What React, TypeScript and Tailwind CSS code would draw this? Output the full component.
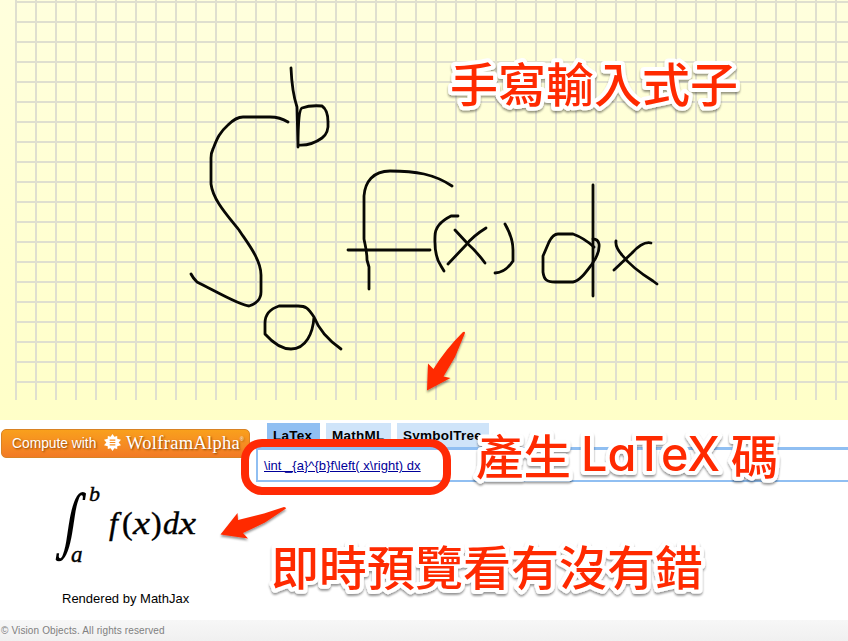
import type { ReactNode } from "react";

const tabs = [
  { label: "LaTex", style: "w-[53px] bg-[#90bff2]" },
  { label: "MathML", style: "w-[65px] bg-[#cfe4f9]" },
  { label: "SymbolTree", style: "w-[92px] bg-[#cfe4f9]" },
];

const strokes = [
  "M288 122 Q280 117 270 117 H243 C237 117 233 120 228 125 C219 133 217 139 213 149 Q211 153 211 158 V184 C213 200 227 215 239 230 C246 241 261 259 261 275 V292 C261 299 256 304 249 306 C241 306 217 292 197 282 Q193 278 191 274",
  "M291 68 Q292 92 297 107 L298 147 Q298 108 302 108 Q310 105 322 106 Q328 110 328 122 Q329 133 322 138 Q311 146 298 145",
  "M314 317 C308 308 306 306 298 306 H279 C270 309 265 315 265 323 V334 C273 343 282 349 291 349 C306 349 313 333 314 317 Q321 335 341 349",
  "M452 186 C434 174 416 171 390 171 C373 171 365 182 364 196 V239 C365 245 367 250 367 260 L369 267 V289",
  "M348 250 H430",
  "M458 216 H451 Q435 224 435 236 Q434 256 441 266 L444 271",
  "M455 230 L467 243 Q477 252 485 263 M486 228 Q473 236 466 245 L448 264",
  "M505 224 Q513 238 513 250 V261 Q505 273 495 273",
  "M593 185 V296",
  "M594 247 Q584 238 573 234 H558 Q553 234 549 242 L543 256 V272 C544 280 547 282 555 282 H573 C580 281 586 272 592 264 Q600 253 599 244 Q598 239 593 239",
  "M616 241 Q615 247 622 255 Q632 268 653 281 L657 284 M651 243 Q643 241 632 253 L614 270",
];

function Handwriting() {
  return (
    <svg className="block h-[400px] w-full" viewBox="0 0 848 400">
      <defs>
        <pattern id="squares" x="15" y="1" width="20" height="20" patternUnits="userSpaceOnUse">
          <path d="M0 1H20M1 0V20" stroke="#dfdfcf" strokeWidth="2" />
        </pattern>
      </defs>
      <rect x="15" width="833" height="400" fill="url(#squares)" />
      <g fill="none" stroke="#080804" strokeWidth="2.8" strokeLinecap="round" strokeLinejoin="round">
        {strokes.map((d) => (
          <path key={d} d={d} />
        ))}
      </g>
    </svg>
  );
}

function Spikey() {
  return (
    <svg className="mx-[6px] -mt-[2px] h-[17px] w-[17px] shrink-0" viewBox="0 0 18 18">
      <path
        fill="#fff"
        d="M9 0 11 3 14 2 14 5 18 6 15.5 9 18 12 14 13 14 16 11 15 9 18 7 15 4 16 4 13 0 12 2.5 9 0 6 4 5 4 2 7 3Z"
      />
      <path d="M6 6.5H12M6 9H12M6 11.5H12" stroke="#f58d21" strokeWidth="1.2" />
    </svg>
  );
}

function Callout({ x, y, width, children }: { x: number; y: number; width: number; children: ReactNode }) {
  return (
    <text x={x} y={y} textLength={width} lengthAdjust="spacingAndGlyphs">
      {children}
    </text>
  );
}

function Annotations() {
  return (
    <svg className="pointer-events-none absolute inset-0 h-[641px] w-[848px]" viewBox="0 0 848 641">
      <defs>
        <filter id="drop" x="-10%" y="-20%" width="120%" height="150%">
          <feDropShadow dx="0" dy="2" stdDeviation="1.3" floodColor="#000" floodOpacity=".42" />
        </filter>
      </defs>
      <rect x="245" y="443" width="202" height="48" rx="17" fill="none" stroke="#ff2a05" strokeWidth="8" />
      <g fill="#ff2a05" filter="url(#drop)">
        <path d="M465 333 L455 357 L443.5 376.5 L450.5 378 L427 390.5 L428 363.5 L433.5 369 Q445 350 463 332 Q465 331 465 333Z" />
        <path d="M286 508.5 L265 522.5 L243 533 L248 538.5 L220.5 534.5 L237.5 513 L238 520 L264 513.5 L284 507Q286 507 286 508.5Z" />
      </g>
      <g
        className="font-['Noto_Sans_CJK_TC','Noto_Sans',sans-serif] text-[47px] font-medium"
        fill="#ff2a05"
        stroke="#fff"
        strokeWidth="8"
        strokeLinejoin="round"
        paintOrder="stroke"
        filter="url(#drop)"
      >
        <Callout x={450} y={102} width={288}>手寫輸入式子</Callout>
        <Callout x={476} y={474} width={95}>產生</Callout>
        <text
          x="581"
          y="471"
          textLength="139"
          lengthAdjust="spacingAndGlyphs"
          className="font-['Inter',sans-serif] text-[48px] font-medium [font-feature-settings:'cv11','ss03']"
        >
          LaTeX
        </text>
        <Callout x={731} y={474} width={47}>碼</Callout>
        <Callout x={271} y={585} width={432}>即時預覽看有沒有錯</Callout>
      </g>
    </svg>
  );
}

function Formula() {
  return (
    <svg className="mt-[22px] ml-[50px] block h-[90px] w-[170px]" viewBox="50 480 170 90">
      <g
        className="font-['Liberation_Serif','DejaVu_Serif',serif] italic"
        fill="#000"
        stroke="#000"
        strokeWidth="0.4"
      >
        <text
          transform="translate(54.5 544) skewX(-9) scale(0.88 1.21)"
          className="font-['DejaVu_Math_TeX_Gyre','DejaVu_Serif',serif] text-[52px] not-italic"
          stroke="none"
        >
          ∫
        </text>
        <text x="89" y="501" className="text-[22px]">b</text>
        <text x="71" y="562" className="text-[23px]">a</text>
        <text x="109" y="534" className="text-[32px]">f</text>
        <text x="122" y="534" className="text-[32px] not-italic">(</text>
        <text x="133" y="534" textLength="17" lengthAdjust="spacingAndGlyphs" className="text-[32px]">x</text>
        <text x="151" y="534" className="text-[32px] not-italic">)</text>
        <text x="163" y="534" className="text-[32px]">d</text>
        <text x="179" y="534" textLength="17" lengthAdjust="spacingAndGlyphs" className="text-[32px]">x</text>
      </g>
    </svg>
  );
}

export default function App() {
  return (
    <div className="relative flex h-[641px] w-[848px] flex-col overflow-hidden bg-white font-['Liberation_Sans',Arial,sans-serif] text-black">
      <section className="h-[420px] shrink-0 bg-linear-to-b from-[#ffffdd] to-[#ffffc8]">
        <Handwriting />
      </section>

      <main className="flex h-[200px] shrink-0">
        <div className="w-[256px] shrink-0">
          <button className="mt-[9px] ml-px flex h-[29px] w-[249px] items-center rounded-[5px] border border-[#d98324] bg-linear-to-b from-[#f9a01c] to-[#f27a25] pl-[10px] whitespace-nowrap text-white [text-shadow:1px_1px_2px_#8a4300]">
            <span className="w-[86px] pt-[2px] text-left text-[13.8px]">Compute with</span>
            <Spikey />
            <span className="-ml-px font-['Liberation_Serif',serif] text-[18.5px] leading-[27px] tracking-[0.3px]">
              WolframAlpha
            </span>
            <sup className="-top-[5px] text-[5px]">®</sup>
          </button>
          <Formula />
          <p className="mt-[21px] ml-[62px] text-[13px] leading-[16px] whitespace-nowrap">Rendered by MathJax</p>
        </div>

        <div className="flex grow flex-col pt-[3px]">
          <nav className="ml-[11px] flex h-[24px] gap-[6px]">
            {tabs.map((tab) => (
              <button
                key={tab.label}
                className={`${tab.style} shrink-0 pt-[2px] pl-[6px] text-left text-[13.5px] font-bold tracking-[0.25px]`}
              >
                {tab.label}
              </button>
            ))}
          </nav>
          <div className="h-[35px] border-t-[3px] border-b-2 border-l-2 border-[#90bff2] pt-[7px] pl-[6px]">
            <a className="block text-[13px] leading-[17px] tracking-[0.03px] whitespace-nowrap text-[#000099] underline">
              {"\\int _{a}^{b}f\\left( x\\right) dx"}
            </a>
          </div>
        </div>
      </main>

      <footer className="flex h-[21px] shrink-0 items-center bg-linear-to-b from-[#f7f7f7] to-[#f0f0f0] pb-px pl-px text-[10px] tracking-[0.13px] text-[#808080]">
        © Vision Objects. All rights reserved
      </footer>

      <Annotations />
    </div>
  );
}
